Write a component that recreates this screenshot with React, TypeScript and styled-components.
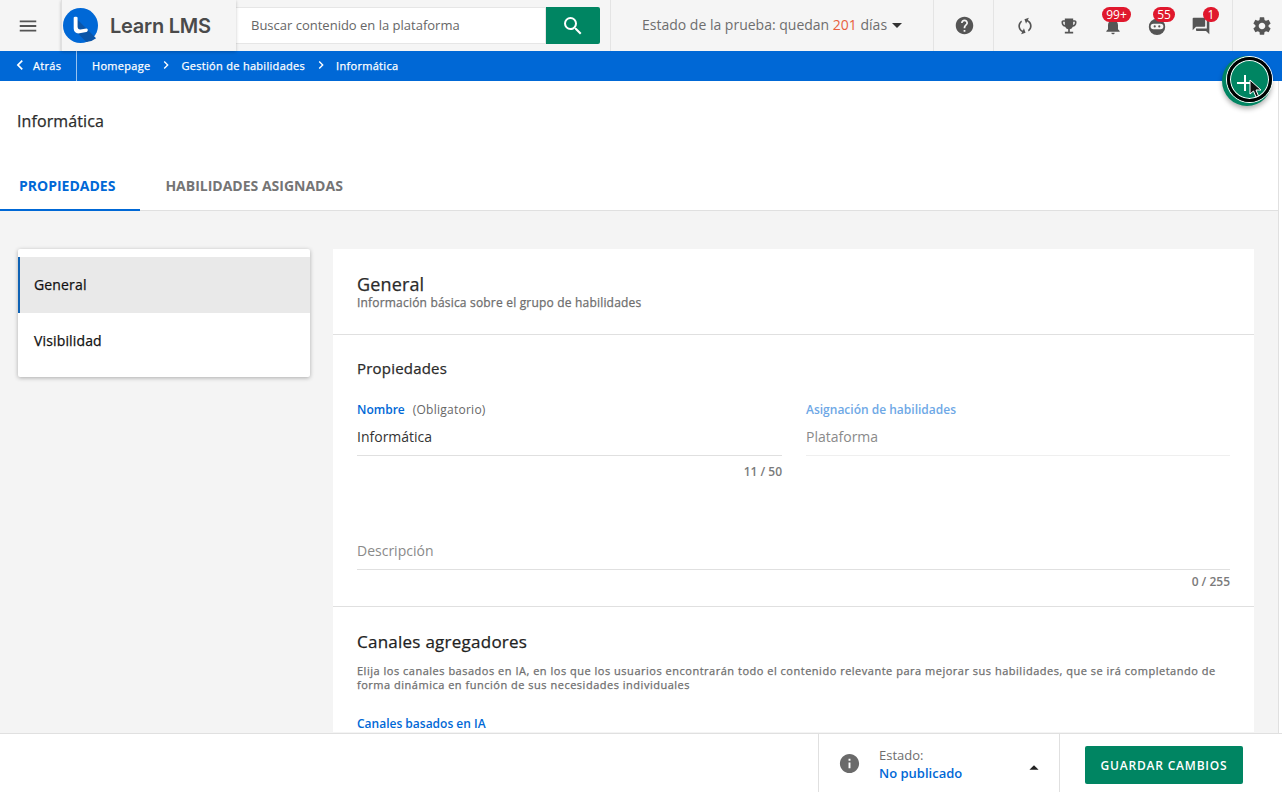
import React from "react";
import styled, { createGlobalStyle, css } from "styled-components";
import {
  MdMenu,
  MdSearch,
  MdHelp,
  MdSync,
  MdEmojiEvents,
  MdNotifications,
  MdQuestionAnswer,
  MdSettings,
  MdInfo,
  MdChevronLeft,
  MdChevronRight,
  MdArrowDropDown,
  MdArrowDropUp,
} from "react-icons/md";

const GlobalStyle = createGlobalStyle`
  html, body {
    margin: 0;
    padding: 0;
    height: 100%;
    overflow: hidden;
    background: #fff;
    font-family: "Open Sans", "Liberation Sans", sans-serif;
  }
  * {
    box-sizing: border-box;
  }
`;

const BLUE = "#0068d6";
const GREEN = "#008562";

// the installed Open Sans has no real medium cut
const medium = css`
  font-weight: 400;
  -webkit-text-stroke: 0.25px currentColor;
`;

const Page = styled.div`
  position: relative;
  display: flex;
  flex-direction: column;
  width: 1282px;
  height: 792px;
  overflow: hidden;
`;

const Header = styled.header`
  display: flex;
  flex: 0 0 51px;
  background: #f5f5f5;
  color: #555;
`;

const MenuCell = styled.div`
  display: flex;
  flex: 0 0 61px;
  align-items: center;
  padding-left: 17px;
  font-size: 22px;
`;

const LogoCell = styled.div`
  display: flex;
  flex: 0 0 175px;
  align-items: center;
  gap: 12px;
  padding-left: 1px;
  border-left: 1px solid #e0e0e0;
  box-shadow: 0 1px 3px rgba(0, 0, 0, 0.22);
  z-index: 1;
`;

const LogoText = styled.span`
  font-family: Inter, "Open Sans", sans-serif;
  font-size: 20px;
  font-weight: 600;
  letter-spacing: -0.25px;
  color: #4a4a4a;
`;

const SearchCell = styled.div`
  display: flex;
  flex: 0 0 375px;
  align-items: center;
  padding-right: 10px;
  border-right: 1px solid #e4e4e4;
`;

const SearchBox = styled.div`
  display: flex;
  flex: 1;
  align-items: center;
  height: 37px;
  padding: 0 0 2px 15px;
  background: #fff;
  border: 1px solid #e6e6e6;
  border-left: 0;
  font-size: 13px;
  color: #666;
`;

const SearchButton = styled.div`
  display: flex;
  flex: 0 0 54px;
  align-items: center;
  justify-content: center;
  height: 37px;
  background: ${GREEN};
  border-radius: 0 2px 2px 0;
  color: #fff;
  font-size: 24px;
`;

const TrialCell = styled.div`
  display: flex;
  flex: 0 0 323px;
  align-items: center;
  padding: 0 0 2px 31px;
  border-right: 1px solid #e4e4e4;
  font-size: 14px;
  color: #6e6e6e;
  white-space: pre;
`;

const Days = styled.span`
  color: #e8603f;
`;

const Caret = styled.span`
  display: flex;
  margin-left: -2px;
  font-size: 24px;
  color: #333;
`;

const HelpCell = styled.div`
  display: flex;
  flex: 0 0 60px;
  align-items: center;
  justify-content: center;
  padding-left: 2px;
  border-right: 1px solid #e4e4e4;
  font-size: 21px;
`;

const IconsCell = styled.div`
  display: flex;
  flex: 0 0 238px;
  padding: 0 9px;
  border-right: 1px solid #e4e4e4;
`;

const IconSlot = styled.div`
  position: relative;
  display: flex;
  flex: 0 0 44px;
  align-items: center;
  justify-content: center;
  padding-top: 1px;
  font-size: 20px;
`;

const SyncIcon = styled(MdSync)`
  transform: rotate(25deg);
`;

const Badge = styled.span<{ $w: number; $left: number }>`
  position: absolute;
  top: 7px;
  left: ${(p) => p.$left}px;
  width: ${(p) => p.$w}px;
  height: 15px;
  border-radius: 8px;
  background: #e0182d;
  color: #fff;
  font-size: 12px;
  line-height: 15px;
  text-align: center;
`;

const GearCell = styled.div`
  display: flex;
  flex: 1;
  align-items: center;
  padding-left: 18px;
  font-size: 22px;
`;

const CrumbBar = styled.nav`
  display: flex;
  flex: 0 0 30px;
  align-items: stretch;
  background: ${BLUE};
  color: #fff;
  font-size: 11px;
  ${medium}
  letter-spacing: 0.3px;
`;

const BackLink = styled.div`
  display: flex;
  flex: 0 0 77px;
  align-items: center;
  padding: 0 0 2px 13px;
  gap: 3px;
  border-right: 1px solid rgba(255, 255, 255, 0.6);
`;

const Crumbs = styled.div`
  display: flex;
  align-items: center;
  padding: 0 0 2px 15px;
`;

const CrumbArrow = styled.span`
  display: flex;
  width: 31px;
  justify-content: center;
  font-size: 16px;
`;

const BackArrow = styled.span`
  display: flex;
  font-size: 20px;
  margin-left: -3px;
`;

const Main = styled.main`
  display: flex;
  flex-direction: column;
  flex: 1;
  min-height: 0;
  width: 1279px;
  overflow: hidden;
  border-right: 1px solid #e0e0e0;
`;

const TitleBar = styled.div`
  flex: 0 0 83px;
  padding: 29px 17px 0;
  font-size: 16px;
  ${medium}
  letter-spacing: 0.1px;
  line-height: 22px;
  color: #2b2b2b;
`;

const Tabs = styled.div`
  display: flex;
  flex: 0 0 47px;
  border-bottom: 1px solid #e0e0e0;
`;

const Tab = styled.div<{ $active?: boolean; $pad: string }>`
  padding: ${(p) => p.$pad};
  margin-bottom: -1px;
  border-bottom: 2px solid ${(p) => (p.$active ? BLUE : "transparent")};
  font-size: 14px;
  font-weight: 700;
  line-height: 19px;
  color: ${(p) => (p.$active ? BLUE : "#757575")};
`;

const Content = styled.div`
  display: flex;
  align-items: flex-start;
  flex: 1;
  min-height: 0;
  gap: 23px;
  padding: 38px 24px 0 18px;
  background: #f4f4f4;
  overflow: hidden;
`;

const SideNav = styled.div`
  flex: 0 0 292px;
  padding: 8px 0;
  background: #fff;
  border-radius: 2px;
  box-shadow: 0 1px 4px rgba(0, 0, 0, 0.3);
`;

const SideItem = styled.div<{ $active?: boolean }>`
  display: flex;
  align-items: center;
  height: 56px;
  padding: 0 0 2px ${(p) => (p.$active ? 14 : 16)}px;
  background: ${(p) => (p.$active ? "#e9e9e9" : "#fff")};
  border-left: ${(p) => (p.$active ? `2px solid #0f62b4` : "0")};
  font-size: 14px;
  ${medium}
  letter-spacing: 0.15px;
  color: #111;
`;

const Card = styled.section`
  flex: 1;
  background: #fff;
`;

const CardHead = styled.div`
  height: 86px;
  padding: 24px 24px 0;
  border-bottom: 1px solid #e0e0e0;
`;

const CardTitle = styled.h2`
  margin: 0;
  font-size: 18px;
  ${medium}
  letter-spacing: 0.15px;
  line-height: 22px;
  color: #2b2b2b;
`;

const CardSub = styled.p`
  margin: 0;
  font-size: 12px;
  ${medium}
  letter-spacing: 0.19px;
  line-height: 15px;
  color: #6e6e6e;
`;

const PropsSection = styled.div`
  height: 272px;
  padding: 23px 24px 0;
  border-bottom: 1px solid #e0e0e0;
`;

const SectionTitle = styled.h3`
  margin: 0;
  font-size: 15px;
  ${medium}
  letter-spacing: 0.2px;
  line-height: 20px;
  color: #2b2b2b;
`;

const FieldGrid = styled.div`
  display: grid;
  grid-template-columns: 425px 424px;
  column-gap: 24px;
  margin-top: 24px;
`;

const FieldLabel = styled.div<{ $muted?: boolean }>`
  font-size: 12px;
  font-weight: 600;
  line-height: 16px;
  color: ${(p) => (p.$muted ? "#6ea8e6" : BLUE)};
`;

const Required = styled.span`
  margin-left: 8px;
  font-weight: 400;
  letter-spacing: 0.25px;
  color: #666;
`;

const FieldValue = styled.div<{ $placeholder?: boolean }>`
  height: 38px;
  padding-top: 9px;
  border-bottom: 1px solid #e0e0e0;
  font-size: 14px;
  line-height: 20px;
  color: ${(p) => (p.$placeholder ? "#8a8a8a" : "#333")};
`;

const FaintValue = styled(FieldValue)`
  border-bottom-color: #efefef;
`;

const Counter = styled.div`
  margin-top: 8px;
  font-size: 12px;
  font-weight: 600;
  line-height: 16px;
  text-align: right;
  color: #7a7a7a;
`;

const TightCounter = styled(Counter)`
  margin-top: 4px;
`;

const DescriptionField = styled.div`
  margin-top: 52px;
`;

const ChannelSection = styled.div`
  padding: 24px 24px 0;
`;

const ChannelTitle = styled.h3`
  margin: 0;
  font-size: 17px;
  ${medium}
  letter-spacing: 0.25px;
  line-height: 22px;
  color: #222;
`;

const ChannelText = styled.p`
  margin: 11px 0 0;
  font-size: 11px;
  ${medium}
  line-height: 14px;
  letter-spacing: 0.51px;
  color: #6e6e6e;
`;

const ChannelLabel = styled.div`
  margin-top: 24px;
  font-size: 12px;
  font-weight: 600;
  line-height: 16px;
  color: ${BLUE};
`;

const Footer = styled.footer`
  display: flex;
  flex: 0 0 59px;
  justify-content: flex-end;
  background: #fff;
  border-top: 1px solid #e0e0e0;
  padding-right: 39px;
`;

const StatusBox = styled.div`
  display: flex;
  align-items: center;
  width: 242px;
  padding-left: 19px;
  border-left: 1px solid #e0e0e0;
  border-right: 1px solid #e0e0e0;
`;

const StatusIcon = styled.span`
  display: flex;
  font-size: 23px;
  color: #6a6a6a;
`;

const StatusText = styled.div`
  flex: 1;
  margin: 2px 0 0 18px;
  font-size: 13px;
  line-height: 18px;
`;

const StatusLabel = styled.div`
  color: #6e6e6e;
`;

const StatusValue = styled.div`
  font-weight: 600;
  color: ${BLUE};
`;

const StatusCaret = styled.span`
  display: flex;
  margin: 10px 14px 0 0;
  font-size: 22px;
  color: #222;
`;

const SaveButton = styled.button`
  align-self: center;
  width: 158px;
  height: 38px;
  margin: 4px 0 0 25px;
  padding: 0;
  border: 0;
  border-radius: 2px;
  background: ${GREEN};
  color: #fff;
  font-family: inherit;
  font-size: 12px;
  font-weight: 600;
  letter-spacing: 0.8px;
`;

const Fab = styled.div`
  position: absolute;
  top: 56px;
  left: 1222px;
  width: 50px;
  height: 50px;
  border-radius: 50%;
  background: ${GREEN};
  box-shadow: 0 3px 5px rgba(0, 0, 0, 0.3);
`;

const FabRing = styled.div`
  position: absolute;
  top: 1px;
  left: 5px;
  width: 45px;
  height: 45px;
  border-radius: 50%;
  border: 3px solid #000;
  box-shadow: 0 0 0 1px #fff, inset 0 0 0 1px #fff;
`;

const FabPlus = styled.svg`
  position: absolute;
  top: 18px;
  left: 14px;
`;

const Pointer = styled.svg`
  position: absolute;
  top: 23px;
  left: 27px;
`;

function LogoMark() {
  return (
    <svg width="35" height="35" viewBox="0 0 36 36">
      <circle cx="18" cy="18" r="18" fill="#0068d6" />
      <path d="M14 11 L34 31 A18 18 0 0 1 24 35 L13 24 Z" fill="#0b55a8" />
      <path
        d="M11 10 C11 8.6 15 8.6 15 10 L15 19 C15 21.2 16.2 22.2 18 22 L24 21 C26 20.8 26 24 24 24.6 L17 26 C13.5 26.6 11 24.5 11 21 Z"
        fill="#fff"
      />
    </svg>
  );
}

function BotIcon() {
  return (
    <svg width="20" height="20" viewBox="0 0 22 22">
      <circle cx="11" cy="12" r="9" fill="#555" />
      <rect x="4" y="8.5" width="14" height="6" rx="3" fill="#f5f5f5" />
      <circle cx="8.5" cy="11.5" r="1.2" fill="#555" />
      <circle cx="13.5" cy="11.5" r="1.2" fill="#555" />
    </svg>
  );
}

export default function App() {
  return (
    <Page>
      <GlobalStyle />
      <Header>
        <MenuCell>
          <MdMenu />
        </MenuCell>
        <LogoCell>
          <LogoMark />
          <LogoText>Learn LMS</LogoText>
        </LogoCell>
        <SearchCell>
          <SearchBox>Buscar contenido en la plataforma</SearchBox>
          <SearchButton>
            <MdSearch />
          </SearchButton>
        </SearchCell>
        <TrialCell>
          Estado de la prueba: quedan <Days>201</Days> días
          <Caret>
            <MdArrowDropDown />
          </Caret>
        </TrialCell>
        <HelpCell>
          <MdHelp />
        </HelpCell>
        <IconsCell>
          <IconSlot>
            <SyncIcon />
          </IconSlot>
          <IconSlot>
            <MdEmojiEvents />
          </IconSlot>
          <IconSlot>
            <MdNotifications />
            <Badge $w={29} $left={11}>
              99+
            </Badge>
          </IconSlot>
          <IconSlot>
            <BotIcon />
            <Badge $w={22} $left={18}>
              55
            </Badge>
          </IconSlot>
          <IconSlot>
            <MdQuestionAnswer />
            <Badge $w={16} $left={24}>
              1
            </Badge>
          </IconSlot>
        </IconsCell>
        <GearCell>
          <MdSettings />
        </GearCell>
      </Header>

      <CrumbBar>
        <BackLink>
          <BackArrow>
            <MdChevronLeft />
          </BackArrow>
          Atrás
        </BackLink>
        <Crumbs>
          Homepage
          <CrumbArrow>
            <MdChevronRight />
          </CrumbArrow>
          Gestión de habilidades
          <CrumbArrow>
            <MdChevronRight />
          </CrumbArrow>
          Informática
        </Crumbs>
      </CrumbBar>

      <Main>
        <TitleBar>Informática</TitleBar>
        <Tabs>
          <Tab $active $pad="12px 25px 14px 19px">
            PROPIEDADES
          </Tab>
          <Tab $pad="12px 0 14px 25px">HABILIDADES ASIGNADAS</Tab>
        </Tabs>
        <Content>
          <SideNav>
            <SideItem $active>General</SideItem>
            <SideItem>Visibilidad</SideItem>
          </SideNav>
          <Card>
            <CardHead>
              <CardTitle>General</CardTitle>
              <CardSub>Información básica sobre el grupo de habilidades</CardSub>
            </CardHead>
            <PropsSection>
              <SectionTitle>Propiedades</SectionTitle>
              <FieldGrid>
                <div>
                  <FieldLabel>
                    Nombre<Required>(Obligatorio)</Required>
                  </FieldLabel>
                  <FieldValue>Informática</FieldValue>
                  <Counter>11 / 50</Counter>
                </div>
                <div>
                  <FieldLabel $muted>Asignación de habilidades</FieldLabel>
                  <FaintValue $placeholder>Plataforma</FaintValue>
                </div>
              </FieldGrid>
              <DescriptionField>
                <FieldValue $placeholder>Descripción</FieldValue>
                <TightCounter>0 / 255</TightCounter>
              </DescriptionField>
            </PropsSection>
            <ChannelSection>
              <ChannelTitle>Canales agregadores</ChannelTitle>
              <ChannelText>
                Elija los canales basados en IA, en los que los usuarios encontrarán todo el
                contenido relevante para mejorar sus habilidades, que se irá completando de forma
                dinámica en función de sus necesidades individuales
              </ChannelText>
              <ChannelLabel>Canales basados en IA</ChannelLabel>
            </ChannelSection>
          </Card>
        </Content>
      </Main>

      <Footer>
        <StatusBox>
          <StatusIcon>
            <MdInfo />
          </StatusIcon>
          <StatusText>
            <StatusLabel>Estado:</StatusLabel>
            <StatusValue>No publicado</StatusValue>
          </StatusText>
          <StatusCaret>
            <MdArrowDropUp />
          </StatusCaret>
        </StatusBox>
        <SaveButton>GUARDAR CAMBIOS</SaveButton>
      </Footer>

      <Fab>
        <FabRing />
        <FabPlus width="18" height="18" viewBox="0 0 18 18">
          <path d="M9 1 V17 M1 9 H17" stroke="#fff" strokeWidth="2" fill="none" />
        </FabPlus>
        <Pointer width="14" height="20" viewBox="0 0 14 20">
          <path
            d="M1 1 L1 15 L4.5 12 L7 18 L9.5 17 L7 11 L12 11 Z"
            fill="#111"
            stroke="#fff"
            strokeWidth="1"
          />
        </Pointer>
      </Fab>
    </Page>
  );
}
